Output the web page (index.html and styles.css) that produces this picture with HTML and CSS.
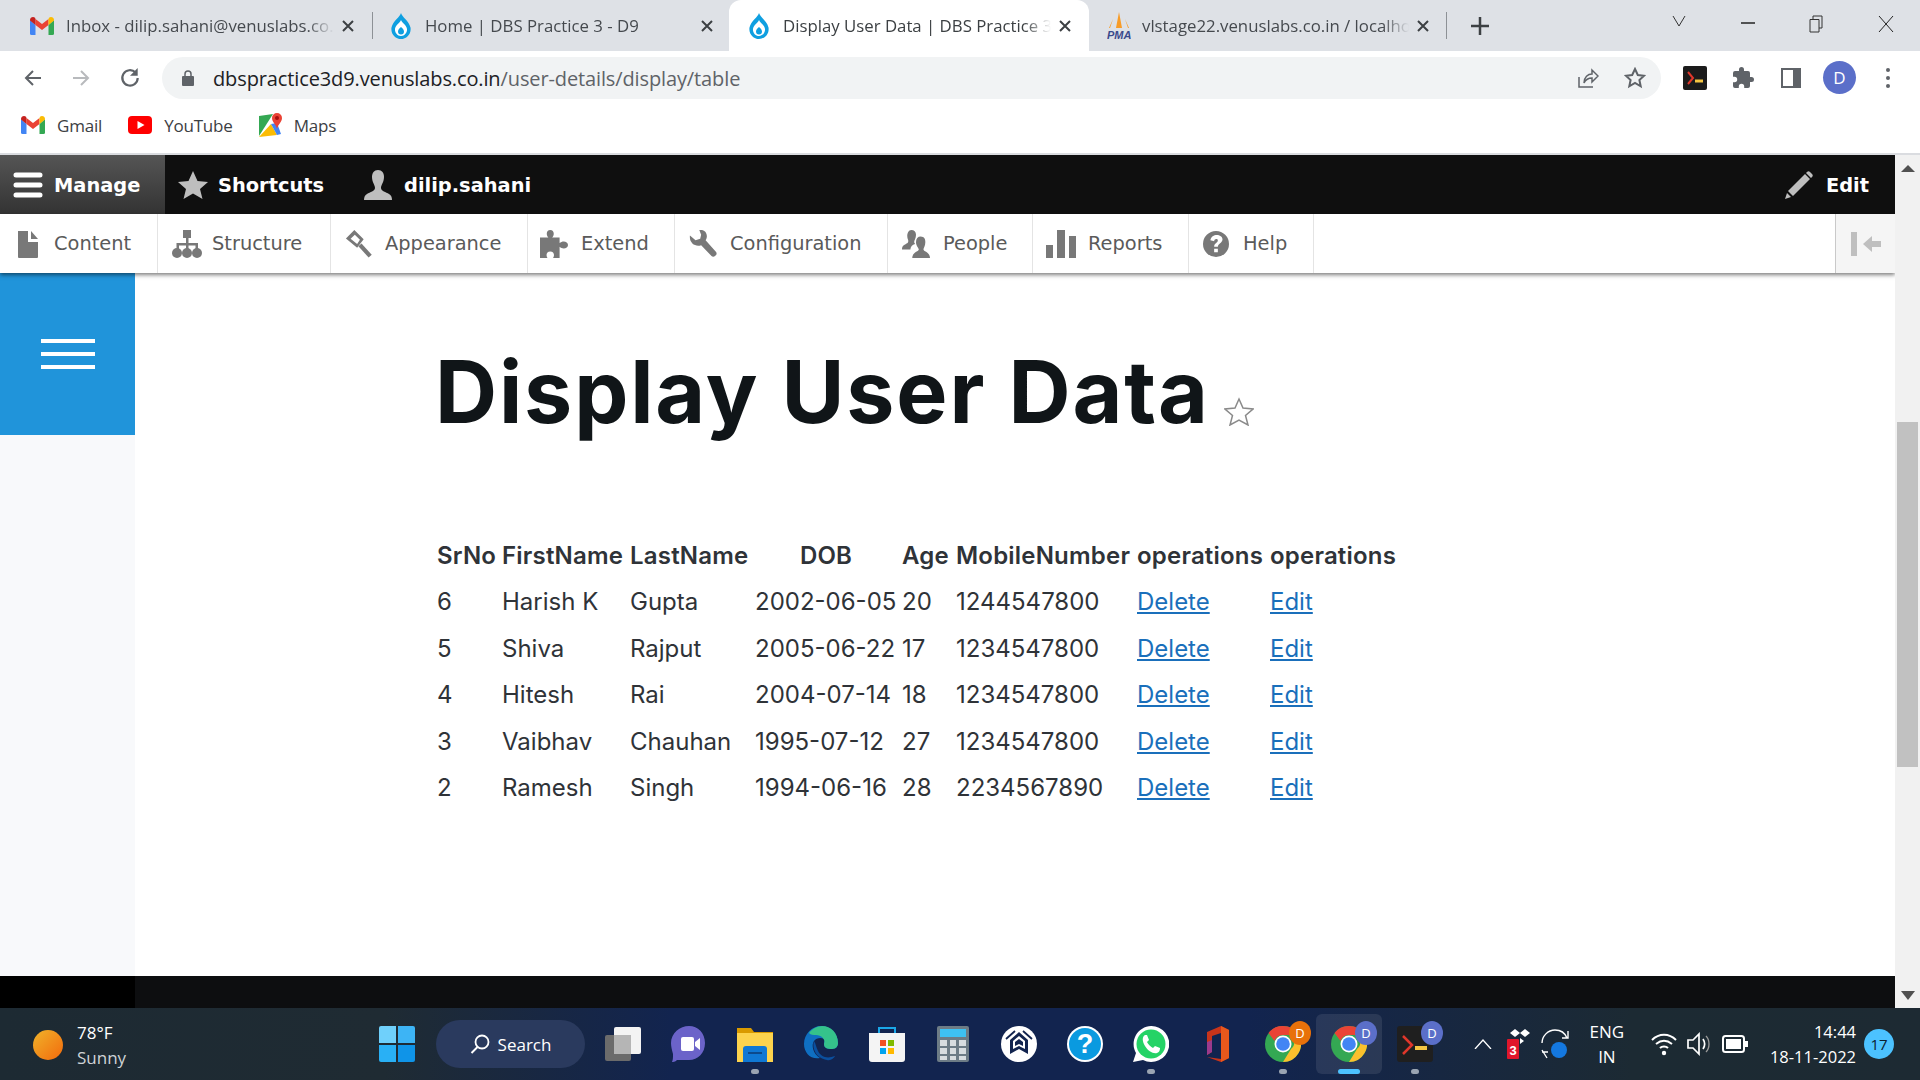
FILE: index.html
```html
<!DOCTYPE html>
<html lang="en">
<head>
    <meta charset="UTF-8">
    <title>Display User Data | DBS Practice 3 - D9</title>
    <link rel="stylesheet" href="styles.css">
</head>
<body>
<svg class="defs" width="0" height="0">
    <symbol id="gmail" viewBox="0 0 24 18">
        <path fill="#4285f4" d="M0 3v13.500A1.500 1.500 0 0 0 1.500 18H5.500V8z"/>
        <path fill="#34a853" d="M18.500 8v10h4A1.500 1.500 0 0 0 24 16.500V3z"/>
        <path fill="#ea4335" d="M5.500 8V2L12 7l6.500-5v6L12 13z"/>
        <path fill="#c5221f" d="M0 3.500V3C0 .5 3 -.8 5 .8L5.500 2v6z"/>
        <path fill="#fbbc04" d="M18.500 8V2l.5-1.200C21 -.8 24 .5 24 3v.5z"/>
    </symbol>
    <symbol id="drop" viewBox="0 0 20 26">
        <path fill="#0f9fe0" d="M10 0c1 4 8 8 9.500 14.500C20.500 21 15.500 26 10 26S-.5 21 .5 14.500C2 8 9 4 10 0z"/>
        <path fill="#fff" d="M10 7c.8 2.500 5.500 5 6 9 .4 3.500-2.500 7-6 7s-6.400-3.500-6-7c.5-4 5.200-6.500 6-9z"/>
        <path fill="#0f9fe0" d="M10 14c1.500 1.500 3 2.500 3 4.500a3 3 0 0 1-6 0c0-2 1.500-3 3-4.500z"/>
    </symbol>
    <symbol id="chrome" viewBox="0 0 36 36">
        <circle cx="18" cy="18" r="18" fill="#34a853"/>
        <path fill="#ea4335" d="M18 0a18 18 0 0 1 15.600 9H18a9 9 0 0 0-8.500 6L3.500 7A18 18 0 0 1 18 0z"/>
        <path fill="#fbc02d" d="M33.600 9A18 18 0 0 1 18 36l8-13a9 9 0 0 0 0-14z"/>
        <circle cx="18" cy="18" r="8.500" fill="#fff"/>
        <circle cx="18" cy="18" r="6.800" fill="#4285f4"/>
    </symbol>
    <symbol id="close" viewBox="0 0 12 12">
        <path fill="none" stroke="#3c4043" stroke-width="2" d="M1 1l10 10M11 1L1 11"/>
    </symbol>
</svg>

<div class="screen">
    <div class="tabstrip">
        <div class="tab first">
            <svg class="fav-gmail"><use href="#gmail"/></svg>
            <span class="tab-title">Inbox - dilip.sahani@venuslabs.co.in</span>
            <svg class="tab-x"><use href="#close"/></svg>
        </div>
        <div class="tab second">
            <svg class="fav-drop"><use href="#drop"/></svg>
            <span class="tab-title">Home | DBS Practice 3 - D9</span>
            <svg class="tab-x"><use href="#close"/></svg>
        </div>
        <div class="tab active">
            <svg class="fav-drop"><use href="#drop"/></svg>
            <span class="tab-title">Display User Data | DBS Practice 3 - D9</span>
            <svg class="tab-x"><use href="#close"/></svg>
        </div>
        <div class="tab fourth">
            <svg class="fav-pma" viewBox="0 0 24 28">
                <path fill="#f89c27" d="M12 0l3 16 6 0 -3-9 4 9H2l4-9-3 9h6z"/>
                <text x="0" y="27" class="pma-text">PMA</text>
            </svg>
            <span class="tab-title">vlstage22.venuslabs.co.in / localhost | phpMyAdmin</span>
            <svg class="tab-x"><use href="#close"/></svg>
        </div>
        <svg class="new-tab" viewBox="0 0 18 18"><path fill="none" stroke="#3c4043" stroke-width="2.500" d="M9 0v18M0 9h18"/></svg>
        <div class="win-controls">
            <svg class="win-chevron" viewBox="0 0 14 12"><path fill="none" stroke="#333" d="M1 1l6 10 6-10"/></svg>
            <svg class="win-min" viewBox="0 0 14 2"><path stroke="#222" stroke-width="1.500" d="M0 1h14"/></svg>
            <svg class="win-restore" viewBox="0 0 14 18"><path fill="none" stroke="#333" d="M1 4.500h9v12.500H1zM4 4.500V1h9v12h-3"/></svg>
            <svg class="win-x" viewBox="0 0 16 18"><path fill="none" stroke="#222" d="M1 1l14 16M15 1L1 17"/></svg>
        </div>
    </div>

    <div class="toolbar">
        <svg class="nav-icon" viewBox="0 0 20 20"><path fill="none" stroke="#5f6368" stroke-width="2" d="M18 10H3M10 3l-7 7 7 7"/></svg>
        <svg class="nav-icon" viewBox="0 0 20 20"><path fill="none" stroke="#b8babd" stroke-width="2" d="M2 10h15M10 3l7 7-7 7"/></svg>
        <svg class="nav-icon nav-reload" viewBox="0 0 20 20"><path fill="none" stroke="#5f6368" stroke-width="2" d="M17 10a7 7 0 1 1-2-5"/><path fill="#5f6368" d="M17 1v7h-7z"/></svg>
        <div class="omnibox">
            <svg class="lock" viewBox="0 0 12 16"><path fill="#5f6368" d="M1 6h10a1 1 0 0 1 1 1v8a1 1 0 0 1-1 1H1a1 1 0 0 1-1-1V7a1 1 0 0 1 1-1z"/><path fill="none" stroke="#5f6368" stroke-width="1.500" d="M3 6V4a3 3 0 0 1 6 0v2"/></svg>
            <span class="url"><span class="url-host">dbspractice3d9.venuslabs.co.in</span>/user-details/display/table</span>
            <svg class="omni-share" viewBox="0 0 22 22"><path fill="none" stroke="#5f6368" stroke-width="1.500" d="M2 10v10h14M7 16c0-6 4-9 8-9V3l6 6-6 6v-4c-3 0-6 1-8 5z"/></svg>
            <svg class="omni-star" viewBox="0 0 22 22"><path fill="none" stroke="#5f6368" stroke-width="2" d="M11 2l2.800 6 6.200.7-4.600 4.300 1.300 6.300L11 16l-5.700 3.300L6.600 13 2 8.700 8.200 8z"/></svg>
        </div>
        <svg class="ext-term" viewBox="0 0 24 24"><rect width="24" height="24" rx="2" fill="#1b1b1b"/><path fill="none" stroke="#e0372b" stroke-width="2" d="M5 6l5 6-5 6"/><path stroke="#f5c542" stroke-width="3" d="M12 15h8"/></svg>
        <svg class="ext-puzzle" viewBox="0 0 24 24"><path fill="#5f6368" d="M20.500 11H19V7a2 2 0 0 0-2-2h-4V3.500a2.500 2.500 0 0 0-5 0V5H4a2 2 0 0 0-2 2v3.800h1.500a2.700 2.700 0 0 1 0 5.400H2V20a2 2 0 0 0 2 2h3.800v-1.500a2.700 2.700 0 0 1 5.400 0V22H17a2 2 0 0 0 2-2v-4h1.500a2.500 2.500 0 0 0 0-5z"/></svg>
        <div class="ext-panel"></div>
        <div class="avatar">D</div>
        <div class="kebab"><i></i><i></i><i></i></div>
    </div>

    <div class="bookmarks">
        <div class="bookmark"><svg class="bm-gmail"><use href="#gmail"/></svg>Gmail</div>
        <div class="bookmark"><svg class="bm-yt" viewBox="0 0 24 18"><rect width="24" height="18" rx="4" fill="#f00"/><path fill="#fff" d="M9.500 5l7 4-7 4z"/></svg>YouTube</div>
        <div class="bookmark"><svg class="bm-maps" viewBox="0 0 24 24"><path fill="#34a853" d="M0 3l14-2-14 22z"/><path fill="#fbbc04" d="M0 24l12-13 6 11z"/><path fill="#4285f4" d="M12 11l6 11 4-1-4-11z"/><path fill="#ea4335" d="M18 0a5 5 0 0 1 5 5c0 4-4 6-5 11-1-5-5-7-5-11a5 5 0 0 1 5-5z"/><circle cx="18" cy="5" r="2" fill="#a50e0e"/></svg>Maps</div>
    </div>

    <div class="viewport">
        <div class="page">
            <div class="admin-bar">
                <div class="admin-tab manage">
                    <svg class="ic-burger" viewBox="0 0 30 26"><path stroke="#fff" stroke-width="5" stroke-linecap="round" d="M3 3h24M3 13h24M3 23h24"/></svg>
                    Manage
                </div>
                <div class="admin-tab shortcuts">
                    <svg class="ic-star" viewBox="0 0 30 28"><path fill="#bebebe" d="M15 0l4.500 10L30 11l-8 7 2.500 10L15 22.500 5.500 28 8 18l-8-7 10.500-1z"/></svg>
                    Shortcuts
                </div>
                <div class="admin-tab user">
                    <svg class="ic-user" viewBox="0 0 28 30"><path fill="#bebebe" d="M14 0c4 0 6 3 6 7 0 5-3 8-3 11 0 3 5 4 8 6 2 1 3 3 3 6H0c0-3 1-5 3-6 3-2 8-3 8-6 0-3-3-6-3-11 0-4 2-7 6-7z"/></svg>
                    dilip.sahani
                </div>
                <div class="admin-tab edit">
                    <svg class="ic-pencil" viewBox="0 0 28 28"><path fill="#bebebe" d="M20 3l5 5L8 25l-5-5zM22 1c1-1 2-1 3 0l2 2c1 1 1 2 0 3l-1 1-5-5zM2 22l4 4-6 2z"/></svg>
                    Edit
                </div>
            </div>

            <div class="tray">
                <div class="tray-item t-content">
                    <svg class="tray-icon" viewBox="0 0 20 28"><path fill="#787878" d="M0 1h10v11h10v15a1 1 0 0 1-1 1H1a1 1 0 0 1-1-1zM13 1l7 8h-7z"/></svg>
                    Content
                </div>
                <div class="tray-item t-structure">
                    <svg class="tray-icon" viewBox="0 0 30 28"><path fill="#787878" d="M11 0h8v8h-2.500v5H26v7h-2.500v-4.500h-7V20H14v-4.500H7V20H4.500v-7h9.500V8H11z"/><circle cx="5" cy="23" r="5" fill="#787878"/><circle cx="15" cy="23" r="5" fill="#787878"/><circle cx="25" cy="23" r="5" fill="#787878"/></svg>
                    Structure
                </div>
                <div class="tray-item t-appearance">
                    <svg class="tray-icon" viewBox="0 0 30 30"><path fill="#787878" fill-rule="evenodd" d="M10 0l10 10-7 9L1 9zM10.500 5L6 9.500l7 5.500 3-4.500z"/><path fill="none" stroke="#787878" stroke-width="4.500" d="M16 16l11 12"/></svg>
                    Appearance
                </div>
                <div class="tray-item t-extend">
                    <svg class="tray-icon" viewBox="0 0 30 30"><path fill="#787878" d="M0 8h9c-3-3-2-8 2-8s5 5 2 8h8v6c3-3 9-2 9 2s-6 5-9 2v12h-7c2-3 1-7-3-7s-5 4-3 7H0z"/></svg>
                    Extend
                </div>
                <div class="tray-item t-config">
                    <svg class="tray-icon" viewBox="0 0 30 30"><path fill="#787878" d="M11 0c5-1 9 3 8 8-.2 1.200-.6 2.200-1.200 3.100L29 23.500c2.200 2.600-2.400 6.800-4.900 4.300L13 16.300C7 18.500 0 14 1 6l6 5 5-1.500L13 5z"/></svg>
                    Configuration
                </div>
                <div class="tray-item t-people">
                    <svg class="tray-icon" viewBox="0 0 30 30"><path fill="#787878" d="M10 0c3 0 5 2 5 5 0 4-2 6-2 8l1 2c-3 1-5 3-5 6H0c0-5 3-5 6-7 1-1 1-3 0-5-1-3 0-9 4-9zM20 7c4 0 5 3 5 6 0 4-2 6-2 8 0 2 7 3 7 9H11c0-6 7-7 7-9s-3-4-3-8 2-6 5-6z"/></svg>
                    People
                </div>
                <div class="tray-item t-reports">
                    <svg class="tray-icon" viewBox="0 0 30 28"><path fill="#787878" d="M0 15h7v13H0zM11 0h8v28h-8zM23 6h7v22h-7z"/></svg>
                    Reports
                </div>
                <div class="tray-item t-help">
                    <svg class="tray-icon" viewBox="0 0 28 28"><path fill="#787878" fill-rule="evenodd" d="M14 0a14 14 0 1 1 0 28 14 14 0 0 1 0-28zM12 19v4h4v-4zM8 10l4 1c0-3 4-3 4-1 0 3-4 3-4 7h4c0-3 5-4 5-8 0-6-12-7-13 1z"/></svg>
                    Help
                </div>
                <div class="tray-toggle">
                    <svg class="ic-collapse" viewBox="0 0 30 24"><path fill="#bfbfbf" d="M0 0h6v24H0zM12 12l9-8v5h9v6h-9v5z"/></svg>
                </div>
            </div>

            <div class="body-row">
                <div class="sidebar">
                    <div class="side-burger"><i></i><i></i><i></i></div>
                </div>
                <div class="content">
                    <div class="title-line">
                        <h1>Display User Data</h1>
                        <svg class="fav-star" viewBox="0 0 30 29"><path fill="none" stroke="#8a8a8a" stroke-width="1.500" d="M15 2l4 9 10 1-7.500 6.500L24 28l-9-5-9 5 2.500-9.500L1 12l10-1z"/></svg>
                    </div>
                    <table class="users">
                        <colgroup>
                            <col class="c-srno"><col class="c-first"><col class="c-last"><col class="c-dob"><col class="c-age"><col class="c-mobile"><col class="c-op"><col class="c-op2">
                        </colgroup>
                        <thead>
                            <tr><th>SrNo</th><th>FirstName</th><th>LastName</th><th class="th-dob">DOB</th><th>Age</th><th>MobileNumber</th><th>operations</th><th>operations</th></tr>
                        </thead>
                        <tbody>
                            <tr><td>6</td><td>Harish K</td><td>Gupta</td><td>2002-06-05</td><td>20</td><td>1244547800</td><td><a href="#">Delete</a></td><td><a href="#">Edit</a></td></tr>
                            <tr><td>5</td><td>Shiva</td><td>Rajput</td><td>2005-06-22</td><td>17</td><td>1234547800</td><td><a href="#">Delete</a></td><td><a href="#">Edit</a></td></tr>
                            <tr><td>4</td><td>Hitesh</td><td>Rai</td><td>2004-07-14</td><td>18</td><td>1234547800</td><td><a href="#">Delete</a></td><td><a href="#">Edit</a></td></tr>
                            <tr><td>3</td><td>Vaibhav</td><td>Chauhan</td><td>1995-07-12</td><td>27</td><td>1234547800</td><td><a href="#">Delete</a></td><td><a href="#">Edit</a></td></tr>
                            <tr><td>2</td><td>Ramesh</td><td>Singh</td><td>1994-06-16</td><td>28</td><td>2234567890</td><td><a href="#">Delete</a></td><td><a href="#">Edit</a></td></tr>
                        </tbody>
                    </table>
                </div>
            </div>

            <div class="footer"><div class="footer-side"></div></div>
        </div>

        <div class="scrollbar">
            <div class="arrow-up"></div>
            <div class="thumb"></div>
            <div class="arrow-down"></div>
        </div>
    </div>

    <div class="taskbar">
        <div class="weather">
            <div class="sun"></div>
            <div class="weather-text"><div>78°F</div><div class="weather-sub">Sunny</div></div>
        </div>
        <div class="task-icons">
            <svg class="tb-start" viewBox="0 0 36 36"><path fill="#6fd0fb" d="M0 2a2 2 0 0 1 2-2h15v17H0z"/><path fill="#3db4f5" d="M19 0h15a2 2 0 0 1 2 2v15H19z"/><path fill="#29b0f5" d="M0 19h17v17H2a2 2 0 0 1-2-2z"/><path fill="#0f94e8" d="M19 19h17v15a2 2 0 0 1-2 2H19z"/></svg>
            <div class="search-pill">
                <svg class="search-ic" viewBox="0 0 20 20"><circle cx="12" cy="8" r="6.500" fill="none" stroke="#fff" stroke-width="1.800"/><path stroke="#fff" stroke-width="2" d="M7.500 13L1.500 19"/></svg>
                Search
            </div>
            <div class="tb-slot first-slot"><svg class="tb-ic" viewBox="0 0 36 36"><rect x="0" y="9" width="26" height="26" rx="2" fill="#6b6b6b"/><rect x="9" y="1" width="27" height="27" rx="2" fill="#f3f3f3"/><rect x="9" y="9" width="17" height="19" fill="#b5b5b5"/></svg></div>
            <div class="tb-slot"><svg class="tb-ic" viewBox="0 0 36 36"><path fill="#6b63c9" d="M18 0c9 0 16 7 16 17s-7 17-16 17H6c-2 2-4 2-5 2 1-2 1-5 1-8-1-4-2-7-2-11C0 7 9 0 18 0z"/><rect x="10" y="11" width="13" height="14" rx="2" fill="#fff"/><path fill="#fff" d="M24 16l5-4v12l-5-4z"/></svg></div>
            <div class="tb-slot running"><svg class="tb-ic" viewBox="0 0 36 36"><path fill="#d99a00" d="M0 2h14l3 4h19v6H0z"/><path fill="#fcd34d" d="M0 7h36v29H0z"/><path fill="#0f78d4" d="M6 23a3 3 0 0 1 3-3h18a3 3 0 0 1 3 3v13H6z"/><path fill="#0c4a8c" d="M11 26h14v2H11z"/></svg></div>
            <div class="tb-slot"><svg class="tb-ic" viewBox="0 0 36 36"><path fill="#0f6fc2" d="M1 18C1 8 9 0 18 0s17 7 17 17c0 3-2 6-6 6-5 0-8-1-8-5 0-3 2-3 0-5-3-2-8-1-10 2-3 4-1 13 6 17C8 34 1 27 1 18z"/><path fill="#35c28b" d="M6 7c3-4 8-7 13-7 9 0 16 7 16 17 0 3-2 6-6 6-5 0-8-1-8-5 2-5-3-9-8-9-3 0-5 0-7-2z"/><path fill="#0b4f9e" d="M11 15c-2 6 1 17 13 19 4 1 7-2 8-4-8 3-14 1-17-5-2-4-2-7-4-10z"/></svg></div>
            <div class="tb-slot"><svg class="tb-ic" viewBox="0 0 36 36"><path fill="none" stroke="#1aa7e8" stroke-width="2" d="M10 8V2h16v6"/><path fill="#f4f4f4" d="M0 7h36v26a3 3 0 0 1-3 3H3a3 3 0 0 1-3-3z"/><path fill="#f25022" d="M11 14h6v6h-6z"/><path fill="#7fba00" d="M19 14h6v6h-6z"/><path fill="#00a4ef" d="M11 22h6v6h-6z"/><path fill="#ffb900" d="M19 22h6v6h-6z"/></svg></div>
            <div class="tb-slot"><svg class="tb-ic" viewBox="0 0 36 36"><rect x="2" width="32" height="36" rx="2" fill="#6d7c86"/><rect x="5" y="3" width="26" height="8" fill="#3ec1f2"/><path fill="#d8dde0" d="M5 14h7v6H5zM15 14h6v6h-6zM24 14h7v6h-7zM5 22h7v6H5zM15 22h6v6h-6zM24 22h7v6h-7zM5 30h7v4H5zM15 30h6v4h-6zM24 30h7v4h-7z"/></svg></div>
            <div class="tb-slot"><svg class="tb-ic" viewBox="0 0 36 36"><circle cx="18" cy="18" r="18" fill="#fff"/><path fill="none" stroke="#12244f" stroke-width="1.800" d="M5 13l9-8M31 13l-9-8"/><path fill="#12244f" d="M9 14l9-8 9 8v14l-9-5-9 5z"/><path fill="#fff" d="M12 15l6-5 6 5v8l-6-3-6 3z"/><path fill="#12244f" d="M14 16l4-3 4 3v4l-4-2-4 2z"/></svg></div>
            <div class="tb-slot"><svg class="tb-ic" viewBox="0 0 36 36"><circle cx="18" cy="18" r="18" fill="#fff"/><circle cx="18" cy="18" r="16" fill="#0a9ae0"/><text x="18" y="27" class="help-q">?</text></svg></div>
            <div class="tb-slot running"><svg class="tb-ic" viewBox="0 0 36 36"><path fill="#fff" d="M18 0a18 18 0 1 1-8 34L0 36l3-9A18 18 0 0 1 18 0z"/><circle cx="18" cy="18" r="14.500" fill="#25d366"/><path fill="#fff" d="M12 9c-3 2-3 6 0 11s8 8 12 7c3-1 3-4 3-5l-5-2-2 2c-2-1-5-4-6-6l2-2-2-5z"/></svg></div>
            <div class="tb-slot"><svg class="tb-ic" viewBox="0 0 36 36"><path fill="#c8341a" d="M8 6l14-6 8 4v28l-8 4-14-5 14 2V7l-9 3v16l-5 3z"/><path fill="#e8581c" d="M22 0l8 4v28l-8 4z"/><path fill="#9c3a8c" d="M8 16l5-2v12l-5 3z"/></svg></div>
            <div class="tb-slot running">
                <svg class="tb-ic"><use href="#chrome"/></svg>
                <span class="prof-badge orange">D</span>
            </div>
            <div class="tb-slot active-slot">
                <svg class="tb-ic"><use href="#chrome"/></svg>
                <span class="prof-badge">D</span>
            </div>
            <div class="tb-slot running">
                <svg class="tb-ic" viewBox="0 0 36 36"><rect width="36" height="36" rx="3" fill="#1f1f1f"/><path fill="none" stroke="#e0372b" stroke-width="2.500" d="M6 10l9 9-9 9"/><path stroke="#f5c542" stroke-width="4" d="M18 22h12"/></svg>
                <span class="prof-badge">D</span>
            </div>
        </div>
        <div class="tray-sys">
            <svg class="sys-chevron" viewBox="0 0 18 10"><path fill="none" stroke="#fff" stroke-width="1.300" d="M1 10l8-9 8 9"/></svg>
            <svg class="sys-drop" viewBox="0 0 26 30"><path fill="#fff" d="M10 0l5 4-5 4-5-4zM20 0l5 4-5 4-5-4zM15 9l4 3-4 3z"/><rect x="2" y="10" width="12" height="20" rx="1" fill="#e0162b"/><text x="8" y="26" class="sys-three">3</text></svg>
            <svg class="sys-sync" viewBox="0 0 30 32"><path fill="none" stroke="#fff" stroke-width="1.400" d="M2 15C2 8 8 2 15 2c6 0 10 3 12 8M22 10h6V3M2 22l5 8M2 24h6"/><circle cx="19" cy="22" r="8" fill="#1478e0"/></svg>
            <div class="lang">ENG<br>IN</div>
            <svg class="sys-wifi" viewBox="0 0 26 24"><path fill="none" stroke="#fff" stroke-width="2" d="M1 8c7-7 17-7 24 0M5 12c5-4 11-4 16 0M9 16c2-2 6-2 8 0"/><circle cx="13" cy="21" r="2.200" fill="#fff"/></svg>
            <svg class="sys-vol" viewBox="0 0 24 24"><path fill="none" stroke="#fff" stroke-width="1.700" d="M1 8h5l6-6v20l-6-6H1zM16 7c2 3 2 7 0 10"/><path fill="none" stroke="#999" stroke-width="1.300" d="M19 4c4 4 4 12 0 16"/></svg>
            <svg class="sys-bat" viewBox="0 0 26 18"><rect x="1" y="1" width="21" height="16" rx="2.500" fill="none" stroke="#fff" stroke-width="2"/><rect x="4" y="4" width="15" height="10" fill="#fff"/><rect x="23" y="6" width="3" height="6" fill="#fff"/></svg>
            <div class="clock"><div>14:44</div><div>18-11-2022</div></div>
            <div class="notify">17</div>
        </div>
    </div>
</div>
</body>
</html>
```

FILE: styles.css
```css
html,body{margin:0;padding:0;overflow:hidden;}
body{font-family:"Open Sans","Noto Sans",sans-serif;color:#222;}
.defs{position:absolute;}
.screen{width:1920px;height:1080px;display:flex;flex-direction:column;}

/* browser tabs */
.tabstrip{height:51px;background:#dee1e6;display:flex;align-items:stretch;padding-left:14px;flex:none;}
.tab{width:358px;box-sizing:border-box;display:flex;align-items:center;padding:0 18px 0 16px;font-size:16.800px;color:#45494e;position:relative;white-space:nowrap;}
.tab.second{width:357px;padding-left:18px;border-left:1px solid #8d9196;height:27px;margin-top:12px;padding-right:16px;}
.tab.second .tab-title{margin-left:14px;}
.tab.active{width:360px;background:#fff;border-radius:12px 12px 0 0;color:#3c4043;padding-left:20px;padding-right:18px;}
.tab.active .tab-title{margin-left:14px;}
.tab.fourth{padding-left:18px;width:358px;padding-right:18px;}
.tab.fourth .tab-title{margin-left:11px;}
.tab.fourth::after{content:"";position:absolute;right:0;top:12px;height:27px;border-right:1px solid #8d9196;}
.tab-title{flex:1;overflow:hidden;margin-left:12px;-webkit-mask-image:linear-gradient(to right,#000 90%,transparent);mask-image:linear-gradient(to right,#000 90%,transparent);}
.tab-x{width:12px;height:12px;flex:none;margin-left:8px;}
.fav-gmail{width:24px;height:18px;flex:none;}
.fav-drop{width:20px;height:26px;flex:none;}
.fav-pma{width:24px;height:28px;flex:none;}
.pma-text{font:italic bold 11px "Liberation Sans",sans-serif;fill:#3b4a8c;}
.new-tab{width:18px;height:18px;margin:17px 0 0 24px;flex:none;}
.win-controls{flex:1;display:flex;align-items:flex-start;padding-top:15px;position:relative;}
.win-chevron{width:14px;height:12px;margin-left:183px;flex:none;}
.win-min{width:16px;height:2px;margin:7px 0 0 54px;flex:none;}
.win-restore{width:14px;height:18px;margin:0 0 0 53px;flex:none;}
.win-x{width:16px;height:18px;margin-left:55px;flex:none;}

/* address bar */
.toolbar{height:53px;background:#fff;display:flex;align-items:center;flex:none;padding-left:23px;box-sizing:border-box;}
.nav-icon{width:20px;height:20px;margin-right:28px;flex:none;}
.nav-reload{width:22px;height:22px;margin-right:26px;}
.omnibox{width:1499px;height:42px;margin-left:-5px;background:#f1f3f4;border-radius:21px;display:flex;align-items:center;flex:none;box-sizing:border-box;padding-left:20px;position:relative;}
.lock{width:12px;height:16px;flex:none;}
.url{margin-left:19px;padding-top:1px;font-size:20px;color:#5f6368;letter-spacing:-.12px;flex:1;}
.url-host{color:#202124;}
.omni-share{width:22px;height:22px;flex:none;}
.omni-star{width:22px;height:22px;margin:0 15px 0 25px;flex:none;}
.ext-term{width:24px;height:24px;margin-left:22px;flex:none;}
.ext-puzzle{width:24px;height:24px;margin-left:24px;flex:none;}
.ext-panel{width:20px;height:20px;margin-left:26px;border:solid #5f6368;border-width:2px 8px 2px 2px;box-sizing:border-box;background:#fff;flex:none;}
.avatar{width:33px;height:33px;border-radius:50%;background:#5b6fc9;color:#fff;font-size:17px;text-align:center;line-height:33px;margin-left:22px;flex:none;}
.kebab{display:flex;flex-direction:column;gap:4px;margin-left:30px;}
.kebab i{width:4px;height:4px;border-radius:50%;background:#5f6368;}

/* bookmarks */
.bookmarks{height:51px;background:#fff;display:flex;align-items:center;padding:0 0 7px 21px;box-sizing:border-box;border-bottom:2px solid #dadce0;flex:none;font-size:17px;color:#3c4043;}
.bookmark{display:flex;align-items:center;margin-right:26px;letter-spacing:-.2px;}
.bm-gmail,.bm-yt{width:24px;height:18px;margin-right:12px;flex:none;}
.bm-maps{width:24px;height:24px;margin-right:11px;flex:none;}

/* page + scrollbar */
.viewport{flex:1;display:flex;min-height:0;}
.page{flex:1;display:flex;flex-direction:column;min-width:0;background:#fff;}
.scrollbar{width:25px;background:#f1f1f1;display:flex;flex-direction:column;align-items:center;flex:none;position:relative;}
.arrow-up{width:0;height:0;border:7px solid transparent;border-top:0;border-bottom:7px solid #505050;margin-top:10px;}
.thumb{width:21px;height:345px;background:#c1c1c1;margin-top:250px;}
.arrow-down{width:0;height:0;border:7px solid transparent;border-bottom:0;border-top:9px solid #505050;margin-top:auto;margin-bottom:8px;}

/* drupal admin toolbar */
.admin-bar{height:59px;background:#0f0f0f;display:flex;align-items:stretch;color:#fff;font:bold 19.400px "DejaVu Sans",sans-serif;flex:none;}
.admin-tab{display:flex;align-items:center;white-space:nowrap;padding-top:1px;}
.manage{width:165px;box-sizing:border-box;padding-left:13px;background:linear-gradient(#555,#333);}
.ic-burger{width:30px;height:26px;margin-right:11px;flex:none;}
.shortcuts{padding-left:13px;}
.ic-star{width:30px;height:28px;margin-right:10px;flex:none;}
.user{padding-left:40px;}
.ic-user{width:28px;height:30px;margin-right:12px;flex:none;}
.edit{margin-left:auto;padding-right:26px;}
.ic-pencil{width:28px;height:28px;margin-right:13px;flex:none;}

.tray{height:59px;background:#fff;display:flex;align-items:stretch;color:#5a5a5a;font:19.400px "DejaVu Sans",sans-serif;flex:none;box-shadow:0 2px 4px rgba(0,0,0,.5);position:relative;}
.tray-item{display:flex;align-items:center;border-right:1px solid #e4e4e4;box-sizing:border-box;white-space:nowrap;}
.tray-icon{height:28px;position:relative;flex:none;}
.t-content{width:158px;padding-left:18px;}
.t-content .tray-icon{width:20px;margin-right:16px;}
.t-structure{width:173px;padding-left:14px;}
.t-structure .tray-icon{width:30px;margin-right:10px;}
.t-appearance{width:197px;padding-left:13px;}
.t-appearance .tray-icon{width:30px;margin-right:11px;}
.t-extend{width:147px;padding-left:11px;}
.t-extend .tray-icon{width:30px;margin-right:12px;}
.t-config{width:213px;padding-left:13px;}
.t-config .tray-icon{width:30px;margin-right:12px;}
.t-people{width:145px;padding-left:13px;}
.t-people .tray-icon{width:30px;margin-right:12px;}
.t-reports{width:156px;padding-left:13px;}
.t-reports .tray-icon{width:30px;margin-right:12px;}
.t-help{width:125px;padding-left:14px;}
.t-help .tray-icon{width:26px;margin-right:14px;}
.tray-toggle{margin-left:auto;width:60px;background:#f5f5f5;border-left:1px solid #c9c9c9;display:flex;align-items:center;justify-content:center;box-sizing:border-box;}
.ic-collapse{width:30px;height:24px;}

/* page body */
.body-row{flex:1;display:flex;min-height:0;}
.sidebar{width:135px;background:#f8f9fb;flex:none;}
.side-burger{height:162px;background:#2094da;display:flex;flex-direction:column;justify-content:center;align-items:center;gap:9px;box-sizing:border-box;}
.side-burger i{width:54px;height:4px;background:#fff;display:block;}
.content{flex:1;padding-left:300px;color:#2f3338;font-family:Inter,"Open Sans",sans-serif;}
.title-line{display:flex;align-items:flex-start;height:120px;margin-top:54px;}
h1{margin:15px 0 0;font-size:86px;font-weight:700;line-height:100px;color:#101518;letter-spacing:1.850px;white-space:nowrap;}
.fav-star{width:30px;height:29px;margin:70px 0 0 14px;flex:none;}
.users{border-collapse:collapse;table-layout:fixed;width:966px;margin:85px 0 0 2px;font-size:24px;}
.users th{text-align:left;font-weight:600;height:46.500px;padding:0;white-space:nowrap;letter-spacing:.2px;}
.users td{height:46.500px;padding:0;white-space:nowrap;}
.users .th-dob{text-align:center;padding-right:5px;}
.users a{color:#1a6fbb;}
.c-srno{width:65px;}
.c-first{width:128px;}
.c-last{width:125px;}
.c-dob{width:147px;}
.c-age{width:54px;}
.c-mobile{width:181px;}
.c-op{width:133px;}
.c-op2{width:133px;}
.footer{height:32px;background:#0d0e10;flex:none;}
.footer-side{width:135px;height:32px;background:#000;}

/* windows taskbar */
.taskbar{height:72px;flex:none;background:linear-gradient(to right,#1d2a33 0,#1f2b33 20%,#12244f 35%,#12244f 65%,#1c2a33 85%,#1d2a33 100%);display:flex;align-items:center;color:#fff;position:relative;}
.weather{display:flex;align-items:center;width:379px;padding:2px 0 0 33px;box-sizing:border-box;flex:none;}
.sun{width:30px;height:30px;border-radius:50%;background:linear-gradient(135deg,#f0b32a,#f26a0c);margin-right:14px;}
.weather-text{font-size:17px;line-height:25px;}
.weather-sub{color:#cfd3d6;}
.task-icons{display:flex;align-items:center;}
.tb-start{width:36px;height:36px;margin-right:21px;flex:none;}
.search-pill{width:149px;height:48px;border-radius:24px;background:#2a3a5e;display:flex;align-items:center;justify-content:center;font-size:17px;flex:none;box-sizing:border-box;}
.search-ic{width:20px;height:20px;margin-right:8px;}
.tb-slot{width:66px;height:60px;display:flex;align-items:center;justify-content:center;position:relative;flex:none;}
.first-slot{margin-left:5px;}
.tb-ic{width:36px;height:36px;}
.running::after,.active-slot::after{content:"";position:absolute;bottom:0;left:50%;width:8px;height:5px;margin-left:-4px;background:#9aa4b2;border-radius:3px;}
.active-slot{background:rgba(255,255,255,.09);border-radius:6px;}
.active-slot::after{width:22px;margin-left:-11px;background:#4cc2ff;}
.prof-badge{position:absolute;top:7px;right:5px;width:22px;height:24px;border-radius:50%;background:#5b6fc9;font-size:13px;line-height:24px;text-align:center;}
.prof-badge.orange{background:#e8710a;}
.tray-sys{display:flex;align-items:center;margin-left:auto;padding-right:26px;}
.sys-chevron{width:18px;height:10px;margin-right:13px;flex:none;}
.sys-drop{width:26px;height:30px;margin-right:9px;flex:none;}
.sys-sync{width:30px;height:32px;flex:none;}
.lang{width:62px;margin-left:6px;font-size:17px;line-height:25px;text-align:center;flex:none;}
.sys-wifi{width:26px;height:24px;margin-left:13px;flex:none;}
.sys-vol{width:24px;height:24px;margin-left:10px;flex:none;}
.sys-bat{width:26px;height:18px;margin-left:11px;flex:none;}
.clock{margin-left:22px;font-size:16.500px;line-height:25px;text-align:right;white-space:nowrap;flex:none;}
.notify{width:30px;height:30px;border-radius:50%;background:#4cc2ff;color:#0b2030;font-size:15px;line-height:30px;text-align:center;margin-left:8px;flex:none;}
.help-q{font:bold 27px "Liberation Sans",sans-serif;fill:#fff;text-anchor:middle;}
.sys-three{font:bold 13px "Liberation Sans",sans-serif;fill:#fff;text-anchor:middle;}
```
